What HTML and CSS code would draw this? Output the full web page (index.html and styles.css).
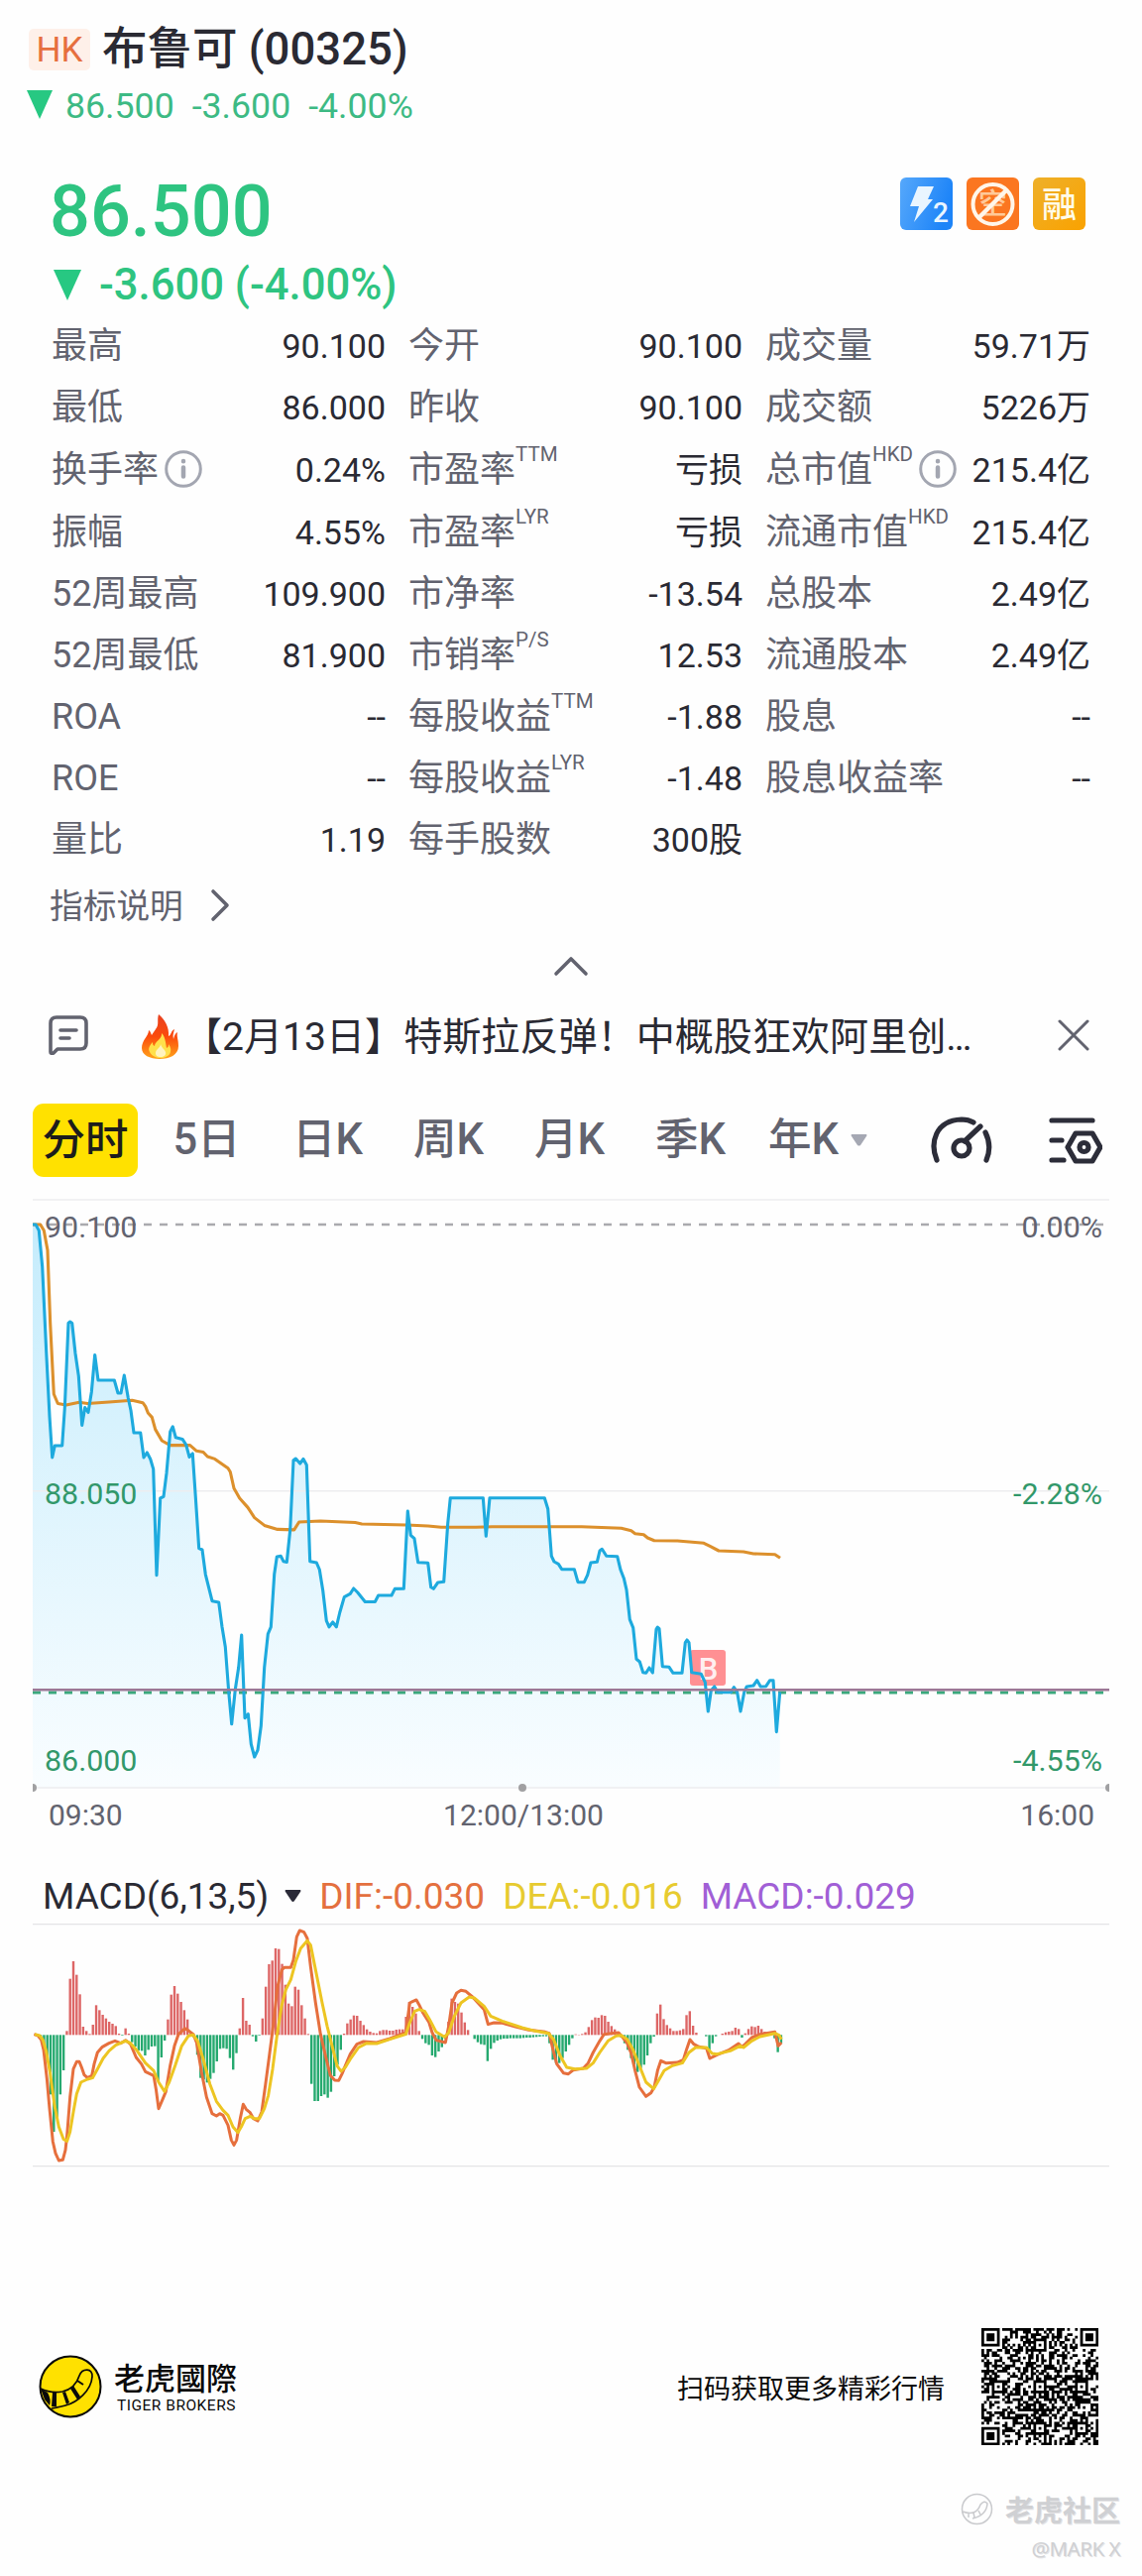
FILE: index.html
```
<!DOCTYPE html>
<html lang="zh-CN">
	<head>
		<meta charset="UTF-8" />
		<meta name="viewport" content="width=device-width, initial-scale=1.0" />
		<title>布鲁可 (00325)</title>
		<link rel="stylesheet" href="styles.css">
	</head>
	<body>
		<header class="header">
			<div class="titleRow">
				<span class="market">HK</span>
				<h1 class="title">布鲁可 (00325)</h1>
			</div>
			<div class="subRow">
				<svg class="tri" width="26" height="29" viewBox="0 0 26 29"><path d="M0 0h26L13 29z" /></svg>
				<span>86.500</span><span>-3.600</span><span>-4.00%</span>
			</div>
		</header>

		<section class="quote">
			<div class="priceRow">
				<span class="price">86.500</span>
				<div class="tags">
					<svg width="53" height="53" viewBox="0 0 53 53">
						<defs><linearGradient id="blue" x1="0" y1="0" x2="1" y2="0.3"><stop offset="0" stop-color="#56a8fb" /><stop offset="1" stop-color="#1d84f8" /></linearGradient></defs>
						<rect width="53" height="53" rx="6" fill="url(#blue)" />
						<path d="M18 9h16l-6 13h5L14 45l5-16h-9z" fill="#e9f5ff" />
						<text x="33" y="45" class="tagNum">2</text>
					</svg>
					<svg width="53" height="53" viewBox="0 0 53 53">
						<rect width="53" height="53" rx="6" fill="#fb7620" />
						<text x="26.5" y="37" class="tagShort">空</text>
						<circle cx="26.5" cy="27" r="20" fill="none" stroke="#fff6ea" stroke-width="4" />
						<path d="M12 41L41 12" stroke="#fff6ea" stroke-width="4.5" />
					</svg>
					<svg width="53" height="53" viewBox="0 0 53 53">
						<defs><linearGradient id="gold" x1="0" y1="0" x2="1" y2="1"><stop offset="0" stop-color="#eeb02a" /><stop offset="1" stop-color="#faa200" /></linearGradient></defs>
						<rect width="53" height="53" rx="6" fill="url(#gold)" />
						<text x="26.5" y="40" class="tagText">融</text>
					</svg>
				</div>
			</div>
			<div class="changeRow">
				<svg class="tri" width="28" height="31" viewBox="0 0 28 31"><path d="M0 0h28L14 31z" /></svg>
				<span>-3.600 (-4.00%)</span>
			</div>
		</section>

		<section class="stats">
			<div class="cell"><span class="label">最高</span><span>90.100</span></div>
			<div class="cell"><span class="label">今开</span><span>90.100</span></div>
			<div class="cell"><span class="label">成交量</span><span>59.71万</span></div>

			<div class="cell"><span class="label">最低</span><span>86.000</span></div>
			<div class="cell"><span class="label">昨收</span><span>90.100</span></div>
			<div class="cell"><span class="label">成交额</span><span>5226万</span></div>

			<div class="cell"><span class="label">换手率<svg class="info" width="38" height="38" viewBox="0 0 38 38"><circle cx="19" cy="19" r="17.3" /><path d="M19 17.5v9M19 11v.2" /></svg></span><span>0.24%</span></div>
			<div class="cell"><span class="label">市盈率<sup>TTM</sup></span><span>亏损</span></div>
			<div class="cell"><span class="label">总市值<sup>HKD</sup><svg class="info" width="38" height="38" viewBox="0 0 38 38"><circle cx="19" cy="19" r="17.3" /><path d="M19 17.5v9M19 11v.2" /></svg></span><span>215.4亿</span></div>

			<div class="cell"><span class="label">振幅</span><span>4.55%</span></div>
			<div class="cell"><span class="label">市盈率<sup>LYR</sup></span><span>亏损</span></div>
			<div class="cell"><span class="label">流通市值<sup>HKD</sup></span><span>215.4亿</span></div>

			<div class="cell"><span class="label">52周最高</span><span>109.900</span></div>
			<div class="cell"><span class="label">市净率</span><span>-13.54</span></div>
			<div class="cell"><span class="label">总股本</span><span>2.49亿</span></div>

			<div class="cell"><span class="label">52周最低</span><span>81.900</span></div>
			<div class="cell"><span class="label">市销率<sup>P/S</sup></span><span>12.53</span></div>
			<div class="cell"><span class="label">流通股本</span><span>2.49亿</span></div>

			<div class="cell"><span class="label">ROA</span><span>--</span></div>
			<div class="cell"><span class="label">每股收益<sup>TTM</sup></span><span>-1.88</span></div>
			<div class="cell"><span class="label">股息</span><span>--</span></div>

			<div class="cell"><span class="label">ROE</span><span>--</span></div>
			<div class="cell"><span class="label">每股收益<sup>LYR</sup></span><span>-1.48</span></div>
			<div class="cell"><span class="label">股息收益率</span><span>--</span></div>

			<div class="cell"><span class="label">量比</span><span>1.19</span></div>
			<div class="cell"><span class="label">每手股数</span><span>300股</span></div>
		</section>

		<div class="explain">
			<span>指标说明</span>
			<svg width="20" height="34" viewBox="0 0 20 34"><path d="M3 3l14 14L3 31" class="line" /></svg>
		</div>
		<div class="collapse">
			<svg width="36" height="22" viewBox="0 0 36 22"><path d="M3 19L18 4l15 15" class="line" /></svg>
		</div>

		<div class="news">
			<svg width="40" height="40" viewBox="0 0 40 40">
				<path d="M2 37V8q0-6 6-6h24q6 0 6 6v20q0 6-6 6H9l-4 4q-3 1-3-1zM12 15h16M12 23h9" class="line" />
			</svg>
			<svg class="fire" width="37" height="45" viewBox="0 0 37 45">
				<defs><linearGradient id="flame" x1="0" y1="0" x2="0" y2="1"><stop offset="0" stop-color="#e8401f" /><stop offset="0.5" stop-color="#fb4b0c" /><stop offset="1" stop-color="#ffa41c" /></linearGradient></defs>
				<path d="M17 0c-2 6 1 10-3 15-2 3-3 4-4 6-1-2-1-4-3-5 0 6-7 10-7 18 0 7 8 11 18 11s19-4 19-13c0-7-2-9-1-14-3 2-3 4-4 7-1-4 0-6 1-10-4 2-3 6-6 7 1-9-4-17-10-22z" fill="url(#flame)" />
				<path d="M20 19c1 6-7 8-7 13-2-1-2-2-2-4-3 3-5 7-3 10 2 4 7 6 11 6s9-2 10-6c1-4-1-6-2-8 0 2 0 3-2 4-1-5-1-11-5-15z" fill="#ffe04a" />
				<path d="M19 30c0 4-5 5-5 9 0 3 2 4 5 4s6-2 5-5c-1-3-4-4-5-8z" fill="#fff3c0" />
			</svg>
			<span class="newsText">【2月13日】特斯拉反弹！中概股狂欢阿里创…</span>
			<svg class="close" width="32" height="32" viewBox="0 0 32 32"><path d="M2 2l28 28M30 2L2 30" class="line" /></svg>
		</div>

		<nav class="tabs">
			<span class="tab active">分时</span>
			<span class="tab">5日</span>
			<span class="tab">日K</span>
			<span class="tab">周K</span>
			<span class="tab">月K</span>
			<span class="tab">季K</span>
			<span class="tab">年K</span>
			<svg class="more" width="17" height="12" viewBox="0 0 17 12"><path d="M1 0h15q1 1 0 2l-6 9q-1.500 1-3 0L1 2Q0 1 1 0z" fill="#a5a8b3" /></svg>
			<svg class="gauge" width="62" height="50" viewBox="0 0 62 50">
				<path d="M6 45C-1 28 4 5 31 4q7 0 12 3M55 17q7 14 1 28M34 26L50 11" />
				<circle cx="31" cy="33" r="8" />
			</svg>
			<svg class="gear" width="54" height="50" viewBox="0 0 54 50">
				<path d="M3 5h41M3 25h10M3 45h12M27 18h17l8 14-8 14H27l-8-14z" />
				<circle cx="35.500" cy="32" r="4.500" />
			</svg>
		</nav>

		<!-- intraday price -->
		<svg class="chart" width="1086" height="641" viewBox="33 1209 1086 641">
			<defs><linearGradient id="area" gradientUnits="userSpaceOnUse" x1="0" y1="1235" x2="0" y2="1803"><stop offset="0" stop-color="#c5ecfc" /><stop offset="1" stop-color="#f9fdff" /></linearGradient></defs>
			<path id="priceArea" fill="url(#area)" />
			<path d="M33 1210h1086M33 1503.700h1086M33 1803h1086" class="grid" />
			<path d="M33 1235h1086" class="dashGray" />
			<path d="M33 1707h1086" class="dashGreen" />
			<rect x="696" y="1664" width="36" height="36" rx="3" fill="#ff9093" />
			<text x="714.500" y="1693.500" class="buy">B</text>
			<polyline class="avg" points="33,1235 40.7,1235 44.3,1241 48,1261 50.7,1335 54.3,1406 58.3,1415.5 66.7,1417 80,1414.300 88.3,1415.5 110,1414 133.3,1412.2 144,1414.7 146.7,1418.4 149.3,1425 153.3,1429.400 156.7,1441.6 163.3,1453 171.7,1457.6 191.7,1457.6 198.3,1463.3 205,1464.5 209.3,1469 216.7,1471.4 230,1480.8 232.3,1484.5 236,1501 241.7,1511 250,1520.4 256.7,1530.6 266.7,1538.4 280,1542.4 296.7,1542.9 301.7,1535 323.3,1534 358.3,1535.5 365,1537 410,1538 431.7,1539 445,1540.3 480,1540.3 496.7,1539.7 586.7,1539.7 626.7,1541.3 636.7,1543.7 640.7,1546.7 649.3,1547.7 653.3,1551 660,1553.7 683.3,1554 710,1556.3 716.7,1559.7 725,1564 750,1565 760,1567 781.7,1567.7 787,1571.3" />
			<polyline class="now" id="priceLine" points="33,1235 36,1235 39.3,1241 42.7,1277.5 46.7,1363 50,1428.5 52.7,1470 55.3,1458 62.7,1458 65.3,1420 69,1334.5 70.7,1333 72.7,1334.5 76,1365 79.3,1387.7 82.7,1437.5 85.7,1419.5 89,1424.5 92.3,1404 95.7,1366.5 99,1392 115.3,1392 119,1405 122,1405 125.3,1387 129.3,1410 132,1422.5 135,1445 141.7,1445 145,1470 148.3,1465 151.7,1471.5 154.7,1481.6 158,1588.6 161.7,1511 165,1509.4 168,1485.7 171.7,1444 174.3,1438.8 177.3,1449.8 184,1451.4 187.7,1457 191,1469.4 194.3,1466 197.3,1510 200.7,1561.6 204,1563 207.3,1587.8 214,1614.7 220.7,1616 224,1640.8 227.3,1661 230.7,1706 233.7,1738.8 237.3,1704 240.7,1681.6 243.7,1649 247,1732.7 250.3,1728.6 253.3,1759 256.7,1772 260,1765 263.3,1740.8 266.7,1681.6 270.3,1647.8 273.3,1640.8 276.7,1587.8 279.3,1570 283.3,1569.4 286,1574.7 289.3,1575.5 292.7,1543 296,1472.7 298.3,1471 302.7,1476 306,1471.4 309.3,1477.6 312.7,1574.7 319.3,1576 322.3,1583 325.7,1604 329.3,1634.7 332,1640.8 335.7,1636 339.3,1640.8 342.7,1626.5 347.3,1610.6 353.3,1607.3 356.7,1602 360.7,1606 368.3,1615.5 378.3,1615.5 381.7,1609 395,1609 398.3,1602.4 407.3,1602.3 411.3,1524 414.3,1548.3 418,1551.7 421.7,1575.7 431.7,1576.3 434.7,1600.7 437.3,1602.3 441.7,1596 447.7,1595.3 451.7,1536.7 454.3,1510.7 487.3,1510.7 490.3,1549.3 494,1510.7 549.3,1510.7 552.7,1521.7 556.3,1569.3 559,1575 563.3,1577.3 566.7,1582.7 579.3,1582.7 583,1595.7 589.3,1595.7 592.7,1588.3 596,1576 602.3,1575.3 605,1564 607.3,1562.3 611.7,1569.3 622.7,1569.7 626,1583.3 629.3,1591.7 632,1603.3 635.3,1633.3 638.7,1641.7 642,1673.3 645.3,1676 648.7,1686.7 651.7,1687.3 655,1682 658.3,1687 662,1643.3 663.3,1641 665,1642.7 668.3,1680.7 675,1681.3 679,1687.3 688,1687.3 691.3,1656.7 693,1654 695,1656.7 697.7,1686.7 707.3,1688.3 711.3,1696.7 714.3,1726 717.3,1705 720.7,1701 724,1706.7 737.3,1706.7 740.3,1701.7 743.7,1706.7 747,1726 750.7,1706.7 753.3,1701 760,1700 763.7,1694.7 767.3,1701 772.7,1700.7 776.7,1694.7 780,1694.7 783.3,1746.7 786.7,1706.7" />
			<path d="M33 1704.300h1086" class="cost" />
			<g fill="#a0a0a2"><circle cx="33" cy="1803" r="4" /><circle cx="527" cy="1803" r="4" /><circle cx="1119" cy="1803" r="4" /></g>
			<g class="axis">
				<text x="45" y="1248">90.100</text>
				<text x="1112" y="1248" class="end">0.00%</text>
				<text x="45" y="1517" class="down">88.050</text>
				<text x="1112" y="1517" class="down end">-2.28%</text>
				<text x="45" y="1786" class="down">86.000</text>
				<text x="1112" y="1786" class="down end">-4.55%</text>
			</g>
			<g class="axis time">
				<text x="49" y="1841">09:30</text>
				<text x="528" y="1841" class="mid">12:00/13:00</text>
				<text x="1104" y="1841" class="end">16:00</text>
			</g>
		</svg>

		<div class="legend">
			<span class="macdName">MACD(6,13,5)</span>
			<svg width="17" height="13" viewBox="0 0 17 13"><path d="M1 0h15q1 1 0 2l-6 9q-1.500 2-3 0L1 2Q0 1 1 0z" fill="#2a2a38" /></svg>
			<span class="dif">DIF:-0.030</span>
			<span class="dea">DEA:-0.016</span>
			<span class="macd">MACD:-0.029</span>
		</div>

		<!-- 3 units per pixel -->
		<svg class="macdChart" width="1086" height="247" viewBox="99 210 3258 741">
			<path d="M99 212h3258M99 944h3258" class="macdGrid" />
			<g id="bars"></g>
			<polyline class="difLine" points="103,545 115,549 125,562 132,592 142,680 150,770 160,870 168,905 178,927 190,925 198,895 203,850 212,735 222,650 232,628 240,628 247,645 255,668 265,677 278,670 285,635 295,600 310,583 330,572 348,565 365,572 380,563 395,575 412,615 428,635 440,658 465,670 472,710 480,770 492,742 502,718 515,640 528,580 540,545 560,527 572,535 585,545 595,570 610,660 625,735 642,785 655,792 665,785 675,790 690,820 700,865 708,880 716,865 727,800 736,757 745,772 757,782 767,800 780,807 792,780 803,700 815,610 828,510 840,400 853,350 860,343 880,343 888,320 898,250 907,231 920,236 930,255 940,340 955,450 970,545 985,610 1000,670 1013,684 1025,685 1035,665 1045,640 1060,605 1080,575 1100,567 1140,570 1180,558 1228,540 1240,450 1250,445 1260,441 1268,455 1280,480 1298,508 1308,540 1320,563 1348,570 1358,520 1368,450 1382,420 1395,412 1410,415 1430,432 1465,470 1477,515 1495,510 1520,511 1560,522 1600,532 1650,538 1662,542 1672,585 1685,635 1705,662 1720,665 1735,653 1765,648 1780,632 1795,600 1815,565 1828,545 1850,542 1872,540 1885,555 1898,572 1910,602 1922,655 1935,705 1955,733 1970,722 1980,705 1990,655 2000,625 2015,632 2050,630 2068,622 2078,590 2088,561 2100,575 2115,583 2138,587 2148,618 2170,607 2205,593 2235,573 2245,583 2255,575 2275,555 2300,545 2345,538 2355,580 2365,570" />
			<polyline class="deaLine" points="105,545 120,549 130,562 140,597 152,665 165,760 178,825 192,862 203,868 212,840 222,780 232,725 245,690 265,681 280,677 295,650 312,618 330,595 350,578 380,565 395,572 415,595 440,632 465,655 480,690 498,718 512,690 530,640 550,580 570,550 585,547 598,565 615,620 635,695 655,748 675,775 690,790 705,825 720,842 730,825 742,800 757,793 770,800 785,800 800,770 812,730 825,650 838,550 852,460 865,410 880,380 895,325 910,285 930,262 940,275 955,350 975,450 990,520 1005,580 1020,640 1032,657 1045,645 1060,620 1085,585 1110,572 1140,573 1180,560 1228,545 1240,510 1255,475 1268,470 1285,475 1300,500 1320,538 1345,553 1358,540 1375,490 1395,450 1420,432 1435,435 1465,460 1485,490 1520,505 1580,525 1620,535 1660,542 1675,560 1695,610 1715,645 1740,650 1775,648 1795,632 1815,600 1840,565 1865,550 1880,548 1898,560 1915,590 1935,640 1955,690 1978,710 1990,690 2010,655 2035,640 2065,632 2085,600 2105,585 2138,585 2155,603 2170,605 2210,595 2240,580 2250,585 2275,565 2300,552 2345,542 2358,548 2365,560" />
		</svg>

		<footer class="footer">
			<svg width="64" height="64" viewBox="0 0 64 64">
				<circle cx="32" cy="32" r="30.500" fill="#ffe100" stroke="#0a0a0a" stroke-width="2" />
				<path d="M2 34q10 5 22 3 13-3 17-16c3-8 14-8 13 1-1 14-15 26-27 29-6 2-11 2-14 3" fill="none" stroke="#0a0a0a" stroke-width="1.7" />
				<path d="M2 34l7 4q4 7 2 13L6 45zM14 38l4 0 0 14h-5zM24 38l3-1 4 11-3 2zM32 34l3-3 7 11-3 3z" fill="#0a0a0a" />
				<path d="M39 26l6 4" stroke="#0a0a0a" stroke-width="2" />
			</svg>
			<div class="brand">
				<span class="brandCn">老虎國際</span>
				<span class="brandEn">TIGER BROKERS</span>
			</div>
			<span class="scan">扫码获取更多精彩行情</span>
			<svg class="qr" width="118" height="118" viewBox="0 0 45 45"><path id="qr" /></svg>
		</footer>

		<div class="community">
			<div class="communityRow">
				<svg width="33" height="33" viewBox="0 0 33 33"><path d="M16.500 1.500a15 15 0 1 1 0 30 15 15 0 1 1 0-30M2 19q14 5 18-7 4-5 7-1-1 12-15 15M8 21v4M13 20l1 5M18 18l2 4" /></svg>
				<span>老虎社区</span>
			</div>
			<span class="user">@MARK X</span>
		</div>

		<script src="script.js"></script>
	</body>
</html>
```
FILE: styles.css
```
* {
	padding: 0;
	margin: 0;
	box-sizing: border-box;
}
body {
	width: 1152px;
	height: 2598px;
	overflow: hidden;
	background: #fefefe;
	color: #2a2a33;
	font-family: Roboto, "Noto Sans CJK SC", sans-serif;
}
svg {
	display: block;
	flex-shrink: 0;
}
.line {
	fill: none;
	stroke: #62636f;
	stroke-width: 3.6;
	stroke-linecap: round;
	stroke-linejoin: round;
}
.header {
	padding: 29px 0 0 27px;
}
.titleRow {
	display: flex;
	align-items: center;
	height: 42px;
}
.market {
	width: 62px;
	height: 42px;
	margin: 0 12px 0 2px;
	border-radius: 5px;
	background: #fef0e9;
	color: #e66f3e;
	font-size: 35px;
	line-height: 43px;
	text-align: center;
}
.title {
	font-size: 45.5px;
	font-weight: 500;
	line-height: 46px;
	white-space: nowrap;
}
.tri {
	fill: #27c882;
}
.subRow {
	display: flex;
	align-items: center;
	gap: 18px;
	height: 50px;
	margin-top: 11px;
	color: #3dba84;
	font-size: 35.7px;
}
.subRow .tri {
	margin: -4px -5px 0 0;
}
.quote {
	padding: 41px 57px 0 50px;
	color: #2ec481;
	font-weight: 500;
}
.priceRow {
	display: flex;
	justify-content: space-between;
	height: 80px;
}
.price {
	font-size: 72px;
	line-height: 81px;
}
.tags {
	display: flex;
	gap: 14px;
	padding-top: 6px;
}
.tagNum {
	fill: #e9f5ff;
	font-size: 28px;
}
.tagShort {
	fill: #ffc999;
	font-size: 29px;
	text-anchor: middle;
}
.tagText {
	fill: #fffbe8;
	font-size: 35px;
	text-anchor: middle;
}
.changeRow {
	display: flex;
	align-items: center;
	gap: 18px;
	height: 60px;
	margin: 4px 0 1px 4px;
	font-size: 43.6px;
}
.stats {
	display: grid;
	grid-template-columns: 337px 336px 327px;
	grid-template-rows: 62px 62px 64px repeat(6, 62px);
	column-gap: 24px;
	padding-left: 52px;
}
.stats .cell:nth-child(3n + 2) {
	margin-left: -1px;
}
.stats .cell:nth-child(3n) {
	margin-left: -1px;
}
.cell {
	display: flex;
	align-items: center;
	justify-content: space-between;
	font-size: 34px;
	line-height: 62px;
	white-space: nowrap;
}
.label {
	display: flex;
	align-items: center;
	color: #62636f;
	font-size: 36px;
}
.label sup {
	height: 62px;
	margin-top: -32px;
	font-size: 20.5px;
	line-height: 62px;
}
.info {
	margin: -2px 0 0 6px;
	fill: none;
	stroke: #a3a6b1;
	stroke-width: 3;
}
.info path {
	stroke-width: 4.5;
	stroke-linecap: round;
}
.explain {
	display: flex;
	align-items: center;
	gap: 27px;
	height: 40px;
	margin-top: 15px;
	padding-left: 50px;
	color: #62636f;
	font-size: 33.7px;
}
.explain span {
	margin-top: -3px;
}
.collapse {
	display: flex;
	justify-content: center;
	margin: 30px 0 29px;
}
.news {
	display: flex;
	align-items: center;
	height: 60px;
	padding: 0 53px 0 49px;
}
.fire {
	margin: 2px 5px 0 54px;
}
.newsText {
	margin-top: -4px;
	font-size: 39.1px;
	white-space: nowrap;
}
.close {
	margin-left: auto;
}
.close .line {
	stroke-width: 3;
}
.tabs {
	display: flex;
	align-items: center;
	height: 74px;
	margin: 39px 0 22px 33px;
	color: #62636f;
	font-size: 43.5px;
	font-weight: 500;
	line-height: 76px;
	white-space: nowrap;
}
.tab {
	width: 71px;
	margin-right: 51px;
	text-align: center;
}
.tab.active {
	width: 106px;
	height: 74px;
	margin-right: 34px;
	border-radius: 11px;
	background: #ffe100;
	color: #1c1c1c;
}
.tab:nth-child(7) {
	margin-right: 12px;
	margin-left: -8px;
}
.gauge {
	margin-left: 64px;
}
.gear {
	margin-left: 57px;
}
.gauge,
.gear {
	fill: none;
	stroke: #2c2d39;
	stroke-width: 5.2;
	stroke-linecap: round;
	stroke-linejoin: round;
}
.chart,
.macdChart {
	margin-left: 33px;
	fill: none;
}
.grid {
	stroke: #ededef;
	stroke-width: 1.6;
}
.dashGray {
	stroke: #aaaaae;
	stroke-width: 2.6;
	stroke-dasharray: 8 8;
}
.dashGreen {
	stroke: #3aa87c;
	stroke-width: 3;
	stroke-dasharray: 8 8;
}
.cost {
	stroke: #9c7896;
	stroke-width: 2.4;
}
.avg,
.now {
	stroke: #dc902c;
	stroke-width: 3.1;
	stroke-linejoin: round;
}
.now {
	stroke: #1eaade;
}
.buy {
	fill: #ffeff0;
	font-size: 31px;
	font-weight: 500;
	text-anchor: middle;
}
.axis {
	fill: #62636f;
	font-size: 30.4px;
}
.time {
	font-size: 30px;
}
.down {
	fill: #32986a;
}
.end {
	text-anchor: end;
}
.mid {
	text-anchor: middle;
}
.legend {
	display: flex;
	align-items: center;
	height: 90px;
	padding: 34px 0 0 43px;
	font-size: 37px;
	white-space: nowrap;
}
.macdName {
	margin-right: 16px;
}
.dif {
	margin: 0 18px;
	color: #e4703f;
}
.dea {
	color: #e7cb30;
}
.macd {
	margin-left: 18px;
	color: #a15fd6;
}
.macdGrid {
	stroke: #e4e4e6;
	stroke-width: 4;
}
.difLine,
.deaLine {
	stroke: #e66f3d;
	stroke-width: 9;
	stroke-linejoin: round;
}
.deaLine {
	stroke: #edc522;
}
.footer {
	display: flex;
	align-items: center;
	height: 126px;
	margin-top: 157px;
	padding: 0 44px 0 39px;
	color: #0a0a0a;
}
.brand {
	display: flex;
	flex-direction: column;
	margin-left: 12px;
}
.brandCn {
	font-family: "Noto Sans CJK TC", sans-serif;
	font-size: 31px;
	font-weight: 500;
	line-height: 36px;
}
.brandEn {
	margin: 1px 0 0 3px;
	font-size: 15.5px;
	letter-spacing: 0.5px;
	line-height: 20px;
}
.scan {
	margin-left: auto;
	font-size: 27px;
}
.qr {
	margin-left: 37px;
}
.community {
	display: flex;
	flex-direction: column;
	align-items: flex-end;
	margin-top: 39px;
	padding-right: 22px;
	color: #cfd0d3;
	text-shadow: 1px 1px 0 #e4e4e6;
}
.communityRow {
	display: flex;
	align-items: center;
	gap: 12px;
	height: 42px;
	font-size: 29px;
	font-weight: 700;
}
.communityRow svg {
	fill: none;
	stroke: #c9cacd;
	stroke-width: 1.5;
}
.user {
	margin-top: 3px;
	font-family: "Noto Sans", sans-serif;
	font-size: 20.5px;
	letter-spacing: -0.5px;
	line-height: 32px;
}
```
FILE: script.js
```
const NS = "http://www.w3.org/2000/svg";

// MACD histogram, one value per minute
const macd = [
	0, 0, -5, -30, -80, -180, -293, -250, -180, -107, 12, 170, 223, 182, 123, 25, 12, 3, 31, 90,
	75, 61, 50, 40, 34, 27, 4, -2, 20, 4, -22, -35, -47, -48, -62, -45, -35, -34, -140, -68,
	-17, 47, 122, 148, 125, 100, 75, 47, 8, -8, -60, -130, -135, -144, -133, -115, -80, -42, -40, -42,
	-70, -105, -55, 20, 112, 43, 31, -4, -20, -2, 50, 146, 214, 225, 262, 260, 215, 152, 95, 87,
	146, 137, 90, 50, 3, -148, -200, -200, -185, -180, -190, -172, -125, -90, -45, 4, 35, 47, 59, 58,
	43, 30, 17, 10, 6, 5, 12, 15, 15, 13, 13, 16, 17, 17, 55, 100, 85, 65, 12, -12,
	-25, -30, -62, -67, -50, -37, -12, 40, 110, 100, 95, 68, 38, 15, 0, -12, -22, -28, -30, -79,
	-42, -24, -17, -13, -11, -11, -10, -10, -10, -10, -9, -8, -8, -7, -6, -5, -4, -4, -25, -75,
	-85, -85, -70, -50, -30, -10, 2, 1, 3, 8, 24, 45, 53, 52, 60, 58, 40, 27, 17, 8,
	-8, -25, -45, -70, -90, -112, -100, -90, -62, -25, -5, 65, 92, 48, 30, 20, 12, 12, 14, 18,
	60, 72, 28, 7, 0, 0, -4, -48, -25, -4, 0, 4, 8, 10, 12, 22, 18, -8, 5, 18,
	26, 24, 28, 18, 10, 5, 5, -10, -52, -25,
];

function drawBars() {
	const bars = document.getElementById("bars");
	macd.forEach((v, i) => {
		if (v == 0) return;
		const rect = document.createElementNS(NS, "rect");
		rect.setAttribute("x", 100 + i * 9.87);
		rect.setAttribute("y", v > 0 ? 547 - v : 547);
		rect.setAttribute("width", 7.2);
		rect.setAttribute("height", Math.abs(v));
		rect.setAttribute("fill", v > 0 ? "#dd6666" : "#25a96f");
		bars.appendChild(rect);
	});
}

function drawArea() {
	const points = document.getElementById("priceLine").getAttribute("points");
	document.getElementById("priceArea").setAttribute("d", "M33,1803 L" + points + " V1803 Z");
}

function drawQr() {
	const size = 45;
	let seed = 325;
	let d = "";
	const ring = (x, y, cx, cy) => Math.max(Math.abs(x - cx), Math.abs(y - cy));
	const finders = [[3, 3], [41, 3], [3, 41]];
	const marks = [[22, 6], [6, 22], [22, 22], [38, 22], [22, 38], [38, 38]];
	for (let y = 0; y < size; y++) {
		for (let x = 0; x < size; x++) {
			seed = (seed * 1103515245 + 12345) % 2147483648;
			let on = (seed >> 12) % 100 < 52;
			if (x == 6 || y == 6) on = (x + y) % 2 == 0;
			finders.forEach(([cx, cy]) => {
				const r = ring(x, y, cx, cy);
				if (r <= 4) on = r < 2 || r == 3;
			});
			marks.forEach(([cx, cy]) => {
				const r = ring(x, y, cx, cy);
				if (r <= 2) on = r != 1;
			});
			if (on) d += `M${x} ${y}h1.05v1.05h-1.05z`;
		}
	}
	document.getElementById("qr").setAttribute("d", d);
}

drawBars();
drawArea();
drawQr();
```
